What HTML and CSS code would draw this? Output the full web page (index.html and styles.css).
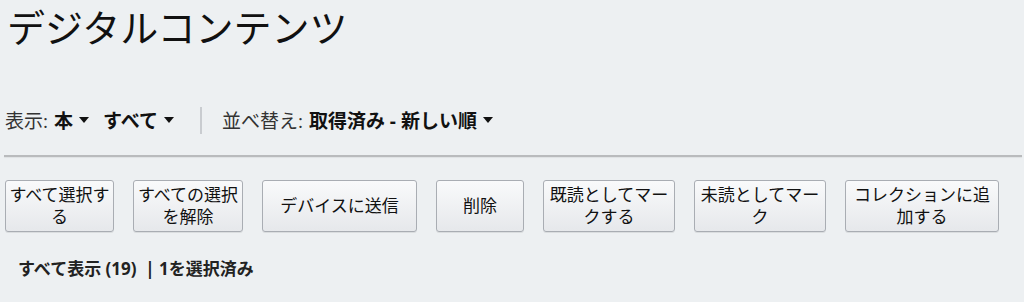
FILE: index.html
```html
<!DOCTYPE html>
<html lang="ja">
<head>
<meta charset="utf-8">
<link rel="stylesheet" href="styles.css">
</head>
<body>
<div class="page">
  <h1 class="title">デジタルコンテンツ</h1>
  <div class="filters">
    <span class="label">表示:</span>
    <span class="dd">本<i class="caret"></i></span>
    <span class="dd">すべて<i class="caret"></i></span>
    <span class="sep"></span>
    <span class="label">並べ替え:</span>
    <span class="dd">取得済み - 新しい順<i class="caret"></i></span>
  </div>
  <div class="rule"></div>
  <div class="actions">
    <button class="btn w1">すべて選択する</button>
    <button class="btn w2">すべての選択を解除</button>
    <button class="btn w3">デバイスに送信</button>
    <button class="btn w4">削除</button>
    <button class="btn w5">既読としてマークする</button>
    <button class="btn w6">未読としてマーク</button>
    <button class="btn w7">コレクションに追加する</button>
  </div>
  <div class="status">すべて表示 (19) &nbsp;| 1を選択済み</div>
</div>
</body>
</html>
```
FILE: styles.css
```css
html, body {
  margin: 0;
  padding: 0;
}
body {
  background: #edf0f2;
  color: #111;
  font-family: "Open Sans", "Noto Sans CJK JP", sans-serif;
  width: 1024px;
  height: 302px;
  overflow: hidden;
}
.page {
  padding: 0 2px 0 4px;
}
.title {
  margin: 0;
  padding: 5px 0 0 3px;
  font-size: 38px;
  font-weight: 400;
  line-height: 44px;
  color: #111;
}
.filters {
  display: flex;
  align-items: center;
  height: 30px;
  margin-top: 56px;
  font-size: 19px;
  padding-left: 1px;
}
.label {
  color: #333;
  margin-right: 6px;
}
.dd {
  font-weight: 700;
  display: inline-flex;
  align-items: center;
  margin-right: 14px;
}
.caret {
  display: inline-block;
  width: 0;
  height: 0;
  border-left: 5px solid transparent;
  border-right: 5px solid transparent;
  border-top: 6px solid #111;
  margin-left: 6px;
}
.sep {
  width: 2px;
  height: 27px;
  background: #c9ccd0;
  margin: 0 20px 0 12px;
}
.rule {
  margin-top: 20px;
  height: 2px;
  background: #b9bbbd;
  box-shadow: 0 1px 1px rgba(0,0,0,0.06);
}
.actions {
  display: flex;
  align-items: stretch;
  gap: 19px;
  margin-top: 23px;
  padding-left: 1px;
}
.btn {
  height: 52px;
  padding: 0 2px;
  border: 1px solid #a9adb3;
  border-radius: 3px;
  background: linear-gradient(#f9fafb, #e6e8eb);
  box-shadow: 0 1px 0 rgba(0,0,0,0.08);
  font-family: "Open Sans", "Noto Sans CJK JP", sans-serif;
  font-size: 17px;
  line-height: 22px;
  color: #111;
  text-align: center;
}
.w1 { width: 109px; }
.w2 { width: 110px; }
.w3 { width: 155px; }
.w4 { width: 88px; }
.w5 { width: 132px; }
.w6 { width: 132px; }
.w7 { width: 154px; }
.status {
  margin-top: 23px;
  padding-left: 14px;
  font-size: 17px;
  font-weight: 700;
  color: #222;
}
```
